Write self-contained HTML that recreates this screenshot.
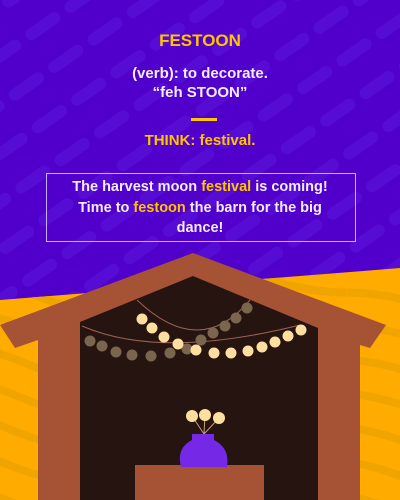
<!DOCTYPE html>
<html><head><meta charset="utf-8"><style>
html,body{margin:0;padding:0}
body{width:400px;height:500px;overflow:hidden;position:relative;background:#5100cc;font-family:"Liberation Sans",sans-serif;font-weight:bold}
svg{position:absolute;left:0;top:0}
.t{position:absolute;left:0;width:400px;text-align:center}
.y{color:#ffc400}
.w{color:#f2ecff}
</style></head><body>
<svg width="400" height="500" viewBox="0 0 400 500">
<defs>
<pattern id="st" width="48" height="40" patternUnits="userSpaceOnUse" patternTransform="rotate(-35)">
<rect x="0" y="0" width="40" height="12" rx="6" fill="#570cd4"/>
</pattern>
<pattern id="wv" width="200" height="34" patternUnits="userSpaceOnUse" patternTransform="rotate(12)">
<path d="M0 10 Q50 0 100 10 T200 10" stroke="#f0a400" stroke-width="8" fill="none"/>
</pattern>
</defs>
<rect width="400" height="500" fill="url(#st)"/>
<path d="M0 300 L400 268 L400 500 L0 500Z" fill="#ffab00"/>
<path d="M0 300 L400 268 L400 500 L0 500Z" fill="url(#wv)"/>
<path d="M193 253 L386 325 L370 348 L360 345 L360 500 L38 500 L38 340 L15 348 L0 325Z" fill="#a65234"/>
<path d="M193 276 L318 328 L318 500 L80 500 L80 322Z" fill="#261410"/>
<rect x="135" y="465" width="129" height="35" fill="#a65234"/>
<path d="M82 326 Q160 360 300 325" stroke="#a06058" stroke-width="1" fill="none"/>
<path d="M137 300 Q200 360 250 300" stroke="#a06058" stroke-width="1" fill="none"/>
<g fill="#7a664c">
<circle cx="90" cy="341" r="5.5"/><circle cx="102" cy="346" r="5.5"/><circle cx="116" cy="352" r="5.5"/><circle cx="132" cy="355" r="5.5"/><circle cx="151" cy="356" r="5.5"/><circle cx="170" cy="353" r="5.5"/><circle cx="187" cy="349" r="5.5"/><circle cx="201" cy="340" r="5.5"/><circle cx="213" cy="333" r="5.5"/><circle cx="225" cy="326" r="5.5"/><circle cx="236" cy="318" r="5.5"/><circle cx="247" cy="308" r="5.5"/>
</g>
<g fill="#ffdfa0">
<circle cx="142" cy="319" r="5.5"/><circle cx="152" cy="328" r="5.5"/><circle cx="164" cy="337" r="5.5"/><circle cx="178" cy="344" r="5.5"/><circle cx="196" cy="350" r="5.5"/><circle cx="214" cy="353" r="5.5"/><circle cx="231" cy="353" r="5.5"/><circle cx="248" cy="351" r="5.5"/><circle cx="262" cy="347" r="5.5"/><circle cx="275" cy="342" r="5.5"/><circle cx="288" cy="336" r="5.5"/><circle cx="301" cy="330" r="5.5"/>
</g>
<g stroke="#c8a070" stroke-width="1"><line x1="204" y1="434" x2="192" y2="416"/><line x1="204" y1="434" x2="205" y2="415"/><line x1="204" y1="434" x2="219" y2="418"/></g>
<g fill="#ffdfa0"><circle cx="192" cy="416" r="6"/><circle cx="205" cy="415" r="6"/><circle cx="219" cy="418" r="6"/></g>
<rect x="192" y="434" width="22" height="8" fill="#7529e6"/>
<path d="M181 467 Q176 448 192 440 L214 440 Q230 448 227 467Z" fill="#7529e6"/>
</svg>
<div class="t y" style="top:31px;font-size:17px">FESTOON</div>
<div class="t w" style="top:64px;font-size:15px;line-height:19px">(verb): to decorate.<br>“feh STOON”</div>
<div style="position:absolute;left:191px;top:118px;width:26px;height:3px;background:#ffc400"></div>
<div class="t y" style="top:132px;font-size:15px">THINK: festival.</div>
<div style="position:absolute;left:46px;top:173px;width:310px;height:69px;border:1px solid #c8b0ff;box-sizing:border-box"></div>
<div class="t w" style="top:177px;font-size:14.5px;line-height:20.5px;left:62px;width:276px">The harvest moon <span class="y">festival</span> is coming! Time to <span class="y">festoon</span> the barn for the big dance!</div>
</body></html>
